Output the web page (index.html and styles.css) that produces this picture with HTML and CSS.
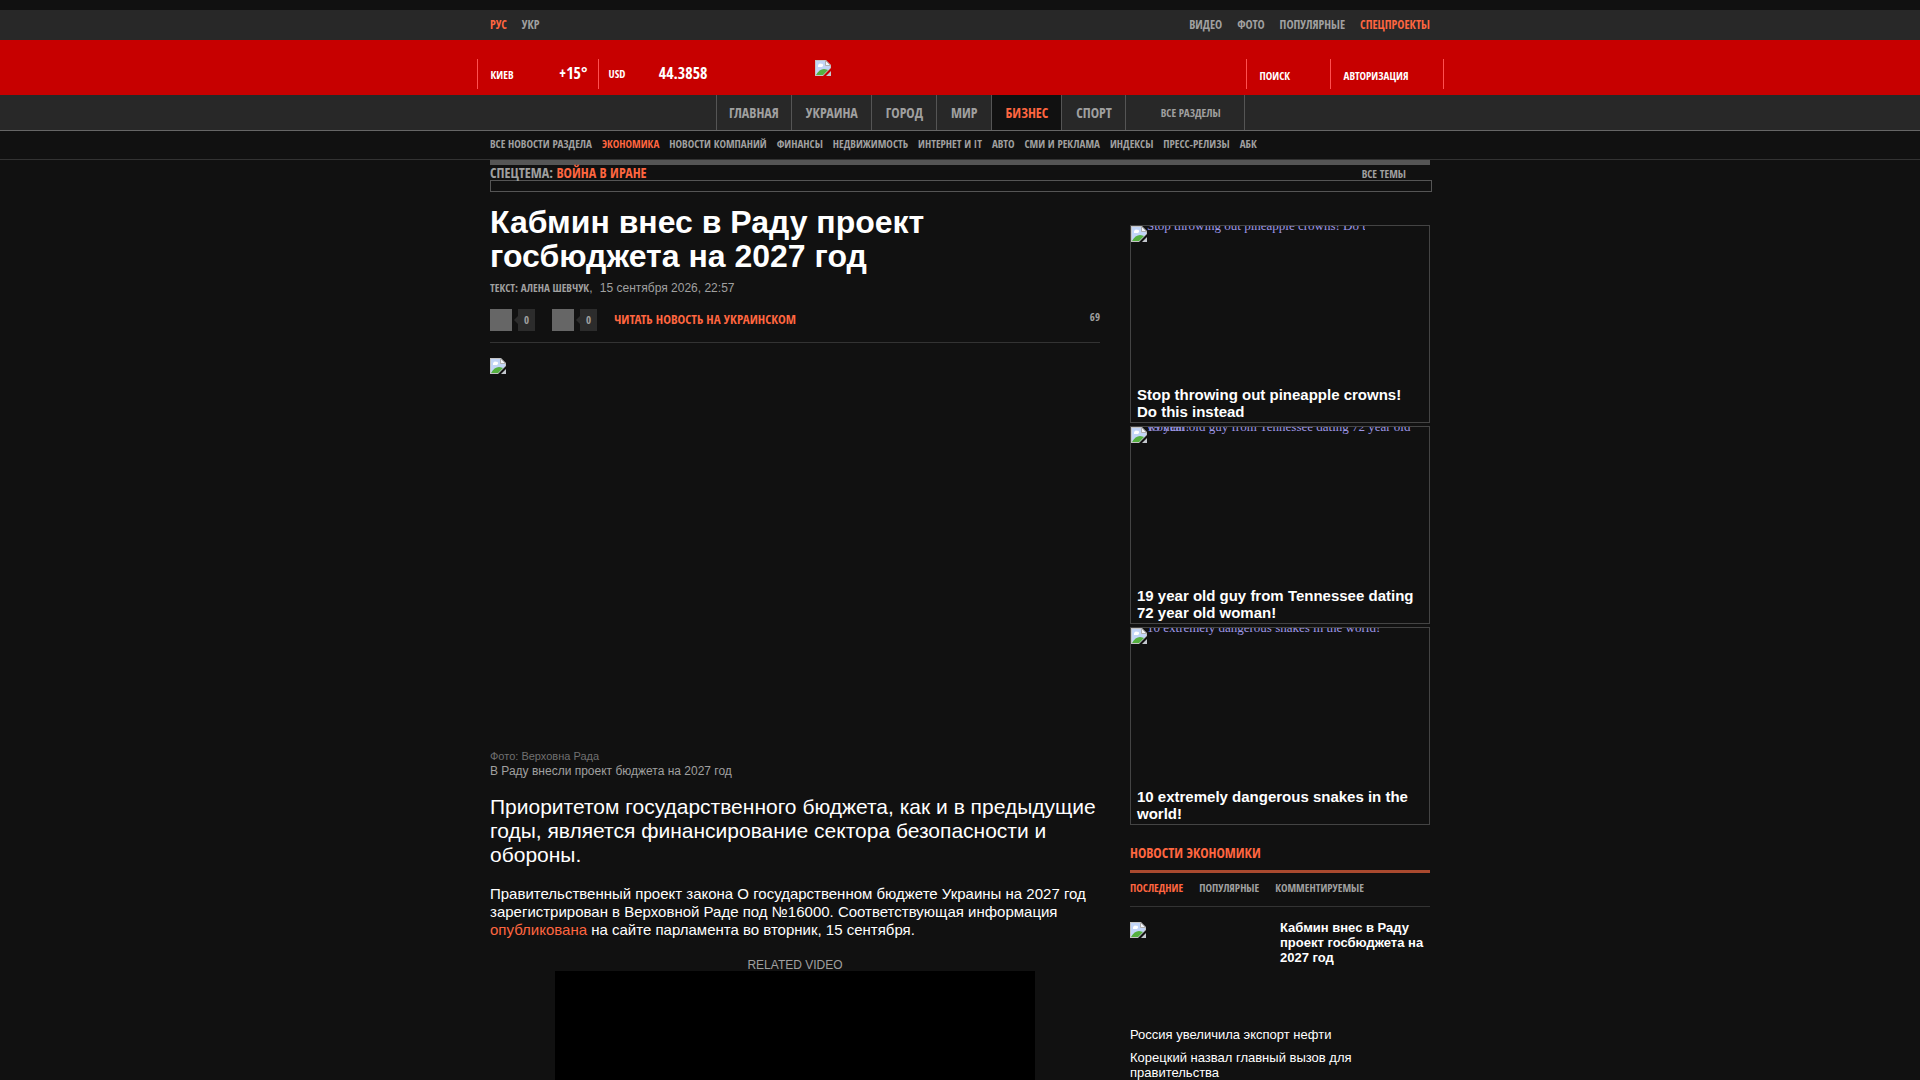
FILE: index.html
```html
<!DOCTYPE html>
<html lang="ru">

<head>
  <meta charset="UTF-8">
  <meta name="viewport" content="width=device-width, initial-scale=1.0">
  <title>Кабмин внес в Раду проект госбюджета на 2027 год</title>
  <link rel="stylesheet" href="styles.css">
</head>

<body>
  <svg class="sprite" aria-hidden="true">
    <symbol id="broken" viewBox="0 0 16 16">
      <path fill="#c4c4c4" d="M0 0h11l5 5v3l-8 8H0z"/>
      <path fill="#c2d5f7" d="M1 1h9v5h5v2l-7 7H1z"/>
      <path fill="#fff" d="M3 6c0-2 2-3 3-2 2-1 3 2 1 3H3z"/>
      <path fill="#55b040" d="M1 15c2-4 5-6 8-6 2 0 3 1 4 1l-5 5z"/>
      <path fill="#f4f6fa" stroke="#b0b0b0" d="M10.500 .500v5h5z"/>
      <path fill="#c4c8ce" d="M16 11v5h-5z"/>
    </symbol>
  </svg>

  <div class="topbar">
    <div class="wrap">
      <nav class="top-links">
        <a href="#" class="active">Рус</a>
        <a href="#">Укр</a>
      </nav>
      <nav class="top-links">
        <a href="#">Видео</a>
        <a href="#">Фото</a>
        <a href="#">Популярные</a>
        <a href="#" class="active">Спецпроекты</a>
      </nav>
    </div>
  </div>

  <header class="header">
    <div class="header-inner">
      <div class="informer weather"><span>Киев</span><b>+15°</b></div>
      <div class="informer currency"><span>USD</span><b>44.3858</b></div>
      <a href="#" class="logo" aria-label="Главная"><svg class="broken"><use href="#broken"/></svg></a>
      <button type="button" class="head-btn search">Поиск</button>
      <button type="button" class="head-btn login">Авторизация</button>
    </div>
  </header>

  <nav class="menu">
    <div class="wrap">
      <div class="menu-list">
        <a href="#">Главная</a>
        <a href="#">Украина</a>
        <a href="#">Город</a>
        <a href="#">Мир</a>
        <a href="#" class="active">Бизнес</a>
        <a href="#">Спорт</a>
        <button type="button">Все разделы</button>
      </div>
    </div>
  </nav>

  <nav class="submenu">
    <div class="submenu-list">
      <a href="#">Все новости раздела</a>
      <a href="#" class="active">Экономика</a>
      <a href="#">Новости компаний</a>
      <a href="#">Финансы</a>
      <a href="#">Недвижимость</a>
      <a href="#">Интернет и IT</a>
      <a href="#">Авто</a>
      <a href="#">СМИ и реклама</a>
      <a href="#">Индексы</a>
      <a href="#">Пресс-релизы</a>
      <a href="#">АБК</a>
    </div>
  </nav>

  <div class="topic">
    <div class="topic-row">
      <div>Спецтема: <a href="#">Война в Иране</a></div>
      <a href="#" class="all-topics">Все темы</a>
    </div>
    <div class="topic-box"></div>
  </div>

  <div class="content">
    <main class="article">
      <h1>Кабмин внес в Раду проект госбюджета на 2027 год</h1>
      <p class="author"><b>Текст: Алена Шевчук</b>, <time>15 сентября 2026, 22:57</time></p>
      <div class="tools">
        <button type="button" class="share" aria-label="Поделиться в Facebook"><i></i><span>0</span></button>
        <button type="button" class="share" aria-label="Поделиться в Twitter"><i></i><span>0</span></button>
        <a href="#" class="translate">Читать новость на украинском</a>
        <span class="views">69</span>
      </div>
      <figure>
        <div class="photo"><svg class="broken"><use href="#broken"/></svg></div>
        <small>Фото: Верховна Рада</small>
        <figcaption>В Раду внесли проект бюджета на 2027 год</figcaption>
      </figure>
      <h2>Приоритетом государственного бюджета, как и в предыдущие годы, является финансирование сектора безопасности и обороны.</h2>
      <p class="text">Правительственный проект закона О государственном бюджете Украины на 2027 год зарегистрирован в Верховной Раде под №16000. Соответствующая информация <a href="#">опубликована</a> на сайте парламента во вторник, 15 сентября.</p>
      <div class="related">RELATED VIDEO</div>
      <div class="video"></div>
    </main>

    <aside class="sidebar">
      <a href="#" class="promo">
        <span class="promo-img"><svg class="broken"><use href="#broken"/></svg><span class="alt short">Stop throwing out pineapple crowns! Do this instead</span></span>
        <strong>Stop throwing out pineapple crowns! Do this instead</strong>
      </a>
      <a href="#" class="promo">
        <span class="promo-img"><svg class="broken"><use href="#broken"/></svg><span class="alt">19 year old guy from Tennessee dating 72 year old</span><span class="alt over">woman!</span></span>
        <strong>19 year old guy from Tennessee dating 72 year old woman!</strong>
      </a>
      <a href="#" class="promo">
        <span class="promo-img"><svg class="broken"><use href="#broken"/></svg><span class="alt">10 extremely dangerous snakes in the world!</span></span>
        <strong>10 extremely dangerous snakes in the world!</strong>
      </a>

      <section class="news">
        <h3>Новости экономики</h3>
        <div class="tabs">
          <a href="#" class="active">Последние</a>
          <a href="#">Популярные</a>
          <a href="#">Комментируемые</a>
        </div>
        <a href="#" class="news-main">
          <svg class="broken"><use href="#broken"/></svg>
          <strong>Кабмин внес в Раду проект госбюджета на 2027 год</strong>
        </a>
        <ul>
          <li><a href="#">Россия увеличила экспорт нефти</a></li>
          <li><a href="#">Корецкий назвал главный вызов для правительства</a></li>
        </ul>
      </section>
    </aside>
  </div>
</body>

</html>
```
FILE: styles.css
```css
* {
  box-sizing: border-box;
}
body {
  margin: 0;
  padding-top: 10px;
  background-color: #111;
  color: #fff;
  font-family: "Liberation Sans", Arial, sans-serif;
  font-size: 12px;
}
a {
  color: inherit;
  text-decoration: none;
}
button {
  margin: 0;
  padding: 0;
  border: 0;
  background: none;
  color: inherit;
  cursor: pointer;
}
.sprite {
  display: none;
}
.broken {
  display: block;
  flex: none;
  width: 16px;
  height: 16px;
}
.wrap, .topic, .content, .submenu-list {
  max-width: 940px;
  margin: 0 auto;
}

/* condensed headings and menus */
.topbar, .header, .header button, .menu, .menu button, .submenu, .topic,
.author b, .tools, .share, .news h3, .tabs {
  font-family: "Open Sans Condensed", "Liberation Sans Narrow", "Open Sans", sans-serif;
  font-weight: bold;
  text-transform: uppercase;
}

.topbar {
  background-color: #282828;
  color: #a0a0a0;
}
.topbar .wrap {
  display: flex;
  justify-content: space-between;
}
.top-links {
  display: flex;
  gap: 15px;
  line-height: 30px;
}
.active, .topic-row div a, .translate, .text a {
  color: #ff6640;
}

.header {
  background-color: #c70000;
  padding: 19px 0 6px;
}
.header-inner {
  display: flex;
  max-width: 967px;
  height: 30px;
  margin: 0 auto;
  border-right: 1px solid #ff5050;
}
.informer {
  display: flex;
  justify-content: space-between;
  border-left: 1px solid #ff5050;
  font-size: 11px;
  line-height: 32px;
}
.informer b {
  font-size: 16px;
  line-height: 28px;
}
.weather {
  width: 121px;
  padding: 0 10px 0 13px;
}
.currency {
  width: 120px;
  padding: 0 10px;
}
.currency span {
  line-height: 30px;
}
.logo {
  flex: 1;
  padding: 1px 0 0 97px;
}
.head-btn {
  border-left: 1px solid #ff5050;
  padding: 3px 0 0 13px;
  font-size: 11px;
  text-align: left;
}
.search {
  width: 84px;
}
.login {
  width: 113px;
}

.menu {
  background-color: #282828;
  border-bottom: 1px solid #666;
  color: #a0a0a0;
}
.menu-list {
  display: flex;
  width: max-content;
  margin-left: 226px;
  border-right: 1px solid #555;
  font-size: 14px;
  line-height: 35px;
}
.menu-list a, .menu-list button {
  padding: 0 13px 0 14px;
  border-left: 1px solid #555;
}
.menu-list a:first-child {
  padding: 0 12px;
}
.menu-list .active {
  background-color: #111;
}
.menu-list button {
  padding: 0 23px 0 35px;
  font-size: 11px;
}

.submenu {
  padding-bottom: 2px;
  border-bottom: 1px solid #333;
  color: #a0a0a0;
}
.submenu-list {
  display: flex;
  gap: 10px;
  font-size: 11px;
  line-height: 26px;
}

.topic {
  border-top: 5px solid #555;
  color: #a0a0a0;
  font-size: 14px;
}
.topic-row {
  display: flex;
  justify-content: space-between;
  height: 15px;
  line-height: 16px;
}
.all-topics {
  margin-right: 24px;
  font-size: 11px;
  line-height: 18px;
}
.topic-box {
  height: 12px;
  margin-right: -2px;
  border: 1px solid #555;
}

.content {
  display: flex;
  gap: 30px;
}
.article {
  flex: 1;
  min-width: 0;
  padding-top: 13px;
}
h1 {
  margin: 0;
  max-width: 480px;
  font-size: 32px;
  line-height: 34px;
}
.author {
  margin: 7px 0 0;
  color: #a0a0a0;
  line-height: 16px;
}
.author b {
  font-size: 11px;
}
.author time {
  margin-left: 4px;
}
.tools {
  display: flex;
  height: 34px;
  margin-top: 13px;
  border-bottom: 1px solid #333;
  color: #a0a0a0;
}
.share {
  display: flex;
  height: 22px;
  margin-right: 17px;
  font-size: 11px;
  line-height: 22px;
}
.share i {
  width: 22px;
  height: 22px;
  margin-right: 6px;
  background-color: #666;
}
.share span {
  width: 17px;
  background-color: #2c2c2c;
}
/* little arrow pointing from the counter to the icon */
.share span::before {
  content: "";
  float: left;
  margin: 7px 0 0 -4px;
  border: 4px solid transparent;
  border-left: 0;
  border-right-color: #2c2c2c;
}
.translate {
  font-size: 13px;
  line-height: 21px;
}
.views {
  margin-left: auto;
  font-size: 11px;
  line-height: 16px;
}
figure {
  margin: 15px 0 0;
  color: #a0a0a0;
}
.photo {
  height: 391px;
}
figure small {
  display: block;
  color: #707070;
  font-size: 11px;
  line-height: 15px;
}
figcaption {
  line-height: 15px;
}
h2 {
  margin: 16px 0 0;
  font-size: 21px;
  font-weight: normal;
  line-height: 24px;
}
.text {
  margin: 18px 0 0;
  font-size: 15px;
  line-height: 18px;
}
.related {
  margin-top: 20px;
  color: #a0a0a0;
  line-height: 12px;
  text-align: center;
}
.video {
  max-width: 480px;
  height: 270px;
  margin: 0 auto;
  background-color: #000;
}

.sidebar {
  width: 300px;
  padding-top: 33px;
}
.promo {
  display: flex;
  flex-direction: column;
  justify-content: space-between;
  height: 198px;
  margin-bottom: 3px;
  padding-bottom: 2px;
  border: 1px solid #444;
}
.promo-img {
  display: flex;
  position: relative;
  overflow: hidden;
}
.alt {
  height: 16px;
  margin-top: -8px;
  color: #9e97e6;
  font-family: "Liberation Serif", serif;
  font-size: 13px;
  line-height: 15px;
  white-space: nowrap;
}
.alt.short {
  width: 218px;
  overflow: hidden;
}
.alt.over {
  position: absolute;
  top: 0;
  left: 16px;
}
.promo strong {
  padding: 0 6px;
  font-size: 15px;
  line-height: 17px;
}

.news {
  padding-top: 16px;
}
.news h3 {
  margin: 0;
  padding-bottom: 8px;
  border-bottom: 3px solid #aa4a2f;
  color: #ff6640;
  font-size: 14px;
  line-height: 18px;
}
.tabs {
  display: flex;
  gap: 16px;
  padding-bottom: 3px;
  border-bottom: 1px solid #333;
  color: #a0a0a0;
  font-size: 11px;
  line-height: 30px;
}
.news-main {
  display: flex;
  justify-content: space-between;
  min-height: 106px;
  padding-top: 15px;
}
.news-main strong {
  width: 150px;
  margin-top: -2px;
  font-size: 13px;
  line-height: 15px;
}
.news ul {
  margin: 0;
  padding: 14px 0 0;
  list-style: none;
  font-size: 13px;
  line-height: 15px;
}
.news li {
  max-width: 260px;
  margin-bottom: 8px;
}
```
